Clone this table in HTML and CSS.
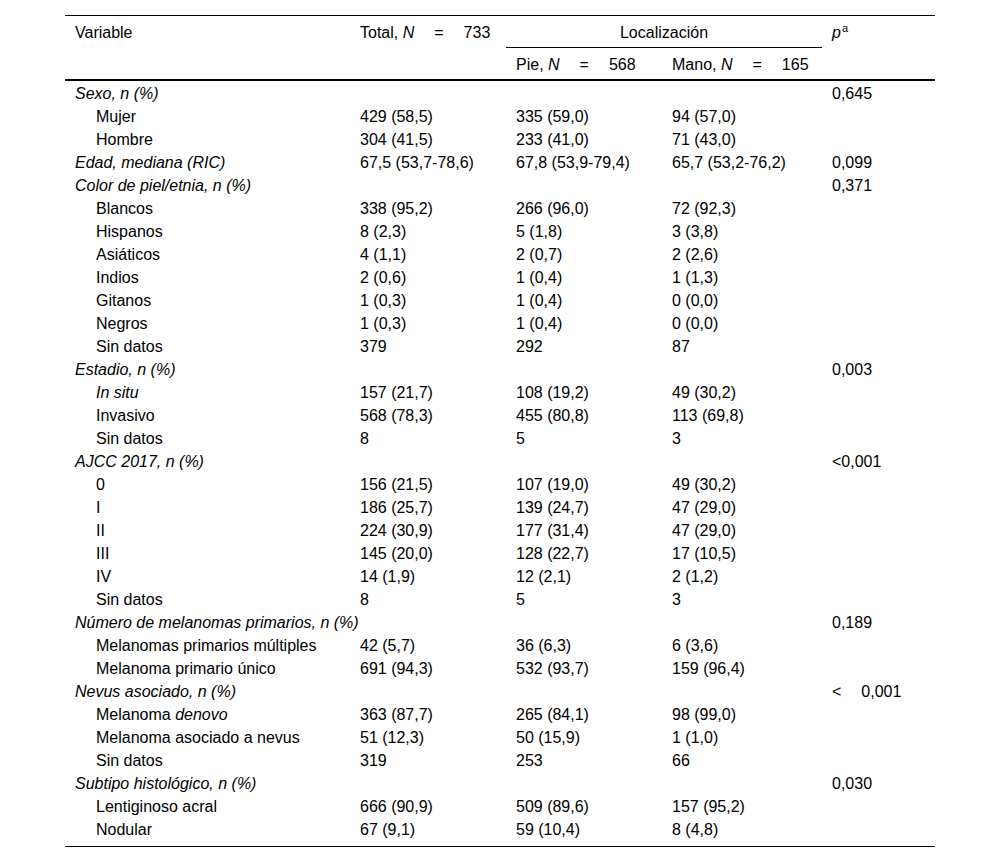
FILE: index.html
```html
<!DOCTYPE html>
<html lang="es">
<head>
<meta charset="utf-8">
<title>Tabla</title>
<link rel="stylesheet" href="styles.css">
</head>
<body>
<table class="tbl">
  <colgroup>
    <col class="c-var"><col class="c-tot"><col class="c-pie"><col class="c-mano"><col class="c-p">
  </colgroup>
  <thead>
    <tr>
      <th rowspan="2" class="hcell">Variable</th>
      <th rowspan="2" class="hcell">Total, <i>N</i><span class="eq">=</span>733</th>
      <th colspan="2" class="hloc">Localización</th>
      <th rowspan="2" class="hcell"><i>p</i><sup>a</sup></th>
    </tr>
    <tr>
      <th class="hsub">Pie, <i>N</i><span class="eq">=</span>568</th>
      <th class="hsub">Mano, <i>N</i><span class="eq">=</span>165</th>
    </tr>
  </thead>
  <tbody>
    <tr><td colspan="4" class="grp">Sexo, n (%)</td><td>0,645</td></tr>
    <tr><td class="sub">Mujer</td><td>429 (58,5)</td><td>335 (59,0)</td><td>94 (57,0)</td><td></td></tr>
    <tr><td class="sub">Hombre</td><td>304 (41,5)</td><td>233 (41,0)</td><td>71 (43,0)</td><td></td></tr>
    <tr><td class="grp">Edad, mediana (RIC)</td><td>67,5 (53,7-78,6)</td><td>67,8 (53,9-79,4)</td><td>65,7 (53,2-76,2)</td><td>0,099</td></tr>
    <tr><td colspan="4" class="grp">Color de piel/etnia, n (%)</td><td>0,371</td></tr>
    <tr><td class="sub">Blancos</td><td>338 (95,2)</td><td>266 (96,0)</td><td>72 (92,3)</td><td></td></tr>
    <tr><td class="sub">Hispanos</td><td>8 (2,3)</td><td>5 (1,8)</td><td>3 (3,8)</td><td></td></tr>
    <tr><td class="sub">Asiáticos</td><td>4 (1,1)</td><td>2 (0,7)</td><td>2 (2,6)</td><td></td></tr>
    <tr><td class="sub">Indios</td><td>2 (0,6)</td><td>1 (0,4)</td><td>1 (1,3)</td><td></td></tr>
    <tr><td class="sub">Gitanos</td><td>1 (0,3)</td><td>1 (0,4)</td><td>0 (0,0)</td><td></td></tr>
    <tr><td class="sub">Negros</td><td>1 (0,3)</td><td>1 (0,4)</td><td>0 (0,0)</td><td></td></tr>
    <tr><td class="sub">Sin datos</td><td>379</td><td>292</td><td>87</td><td></td></tr>
    <tr><td colspan="4" class="grp">Estadio, n (%)</td><td>0,003</td></tr>
    <tr><td class="sub"><i>In situ</i></td><td>157 (21,7)</td><td>108 (19,2)</td><td>49 (30,2)</td><td></td></tr>
    <tr><td class="sub">Invasivo</td><td>568 (78,3)</td><td>455 (80,8)</td><td>113 (69,8)</td><td></td></tr>
    <tr><td class="sub">Sin datos</td><td>8</td><td>5</td><td>3</td><td></td></tr>
    <tr><td colspan="4" class="grp">AJCC 2017, n (%)</td><td>&lt;0,001</td></tr>
    <tr><td class="sub">0</td><td>156 (21,5)</td><td>107 (19,0)</td><td>49 (30,2)</td><td></td></tr>
    <tr><td class="sub">I</td><td>186 (25,7)</td><td>139 (24,7)</td><td>47 (29,0)</td><td></td></tr>
    <tr><td class="sub">II</td><td>224 (30,9)</td><td>177 (31,4)</td><td>47 (29,0)</td><td></td></tr>
    <tr><td class="sub">III</td><td>145 (20,0)</td><td>128 (22,7)</td><td>17 (10,5)</td><td></td></tr>
    <tr><td class="sub">IV</td><td>14 (1,9)</td><td>12 (2,1)</td><td>2 (1,2)</td><td></td></tr>
    <tr><td class="sub">Sin datos</td><td>8</td><td>5</td><td>3</td><td></td></tr>
    <tr><td colspan="4" class="grp">Número de melanomas primarios, n (%)</td><td>0,189</td></tr>
    <tr><td class="sub">Melanomas primarios múltiples</td><td>42 (5,7)</td><td>36 (6,3)</td><td>6 (3,6)</td><td></td></tr>
    <tr><td class="sub">Melanoma primario único</td><td>691 (94,3)</td><td>532 (93,7)</td><td>159 (96,4)</td><td></td></tr>
    <tr><td colspan="4" class="grp">Nevus asociado, n (%)</td><td>&lt;<span class="lt"></span>0,001</td></tr>
    <tr><td class="sub">Melanoma <i>denovo</i></td><td>363 (87,7)</td><td>265 (84,1)</td><td>98 (99,0)</td><td></td></tr>
    <tr><td class="sub">Melanoma asociado a nevus</td><td>51 (12,3)</td><td>50 (15,9)</td><td>1 (1,0)</td><td></td></tr>
    <tr><td class="sub">Sin datos</td><td>319</td><td>253</td><td>66</td><td></td></tr>
    <tr><td colspan="4" class="grp">Subtipo histológico, n (%)</td><td>0,030</td></tr>
    <tr><td class="sub">Lentiginoso acral</td><td>666 (90,9)</td><td>509 (89,6)</td><td>157 (95,2)</td><td></td></tr>
    <tr class="last"><td class="sub">Nodular</td><td>67 (9,1)</td><td>59 (10,4)</td><td>8 (4,8)</td><td></td></tr>
  </tbody>
</table>
</body>
</html>
```
FILE: styles.css
```css
html, body {
  margin: 0;
  padding: 0;
  background: #fff;
}
body {
  padding-top: 15px;
  font-family: "Liberation Sans", Arial, sans-serif;
  font-size: 16px;
  color: #000;
}
.tbl {
  margin-left: 65px;
  width: 870px;
  table-layout: fixed;
  border-collapse: separate;
  border-spacing: 0;
  border-top: 1px solid #000;
  border-bottom: 1px solid #000;
}
.c-var { width: 285px; }
.c-tot { width: 156px; }
.c-pie { width: 156px; }
.c-mano { width: 160px; }
.c-p { width: 113px; }

th {
  font-weight: normal;
  text-align: left;
  line-height: 19px;
  padding: 7px 10px 5px;
}
.hcell {
  vertical-align: top;
  border-bottom: 2px solid #000;
}
.hloc {
  text-align: center;
  border-bottom: 1px solid #000;
}
.hsub {
  border-bottom: 2px solid #000;
}
sup {
  font-size: 11px;
  line-height: 0;
  vertical-align: 6px;
  margin-left: 1px;
}
.eq {
  display: inline-block;
  padding: 0 20px 0 20px;
}
.lt {
  display: inline-block;
  width: 20px;
}
td {
  line-height: 19px;
  padding: 3px 10px 1px;
  white-space: nowrap;
  vertical-align: middle;
}
td.grp {
  font-style: italic;
}
td.sub {
  padding-left: 31px;
}
.last td {
  padding-bottom: 7px;
}
```
